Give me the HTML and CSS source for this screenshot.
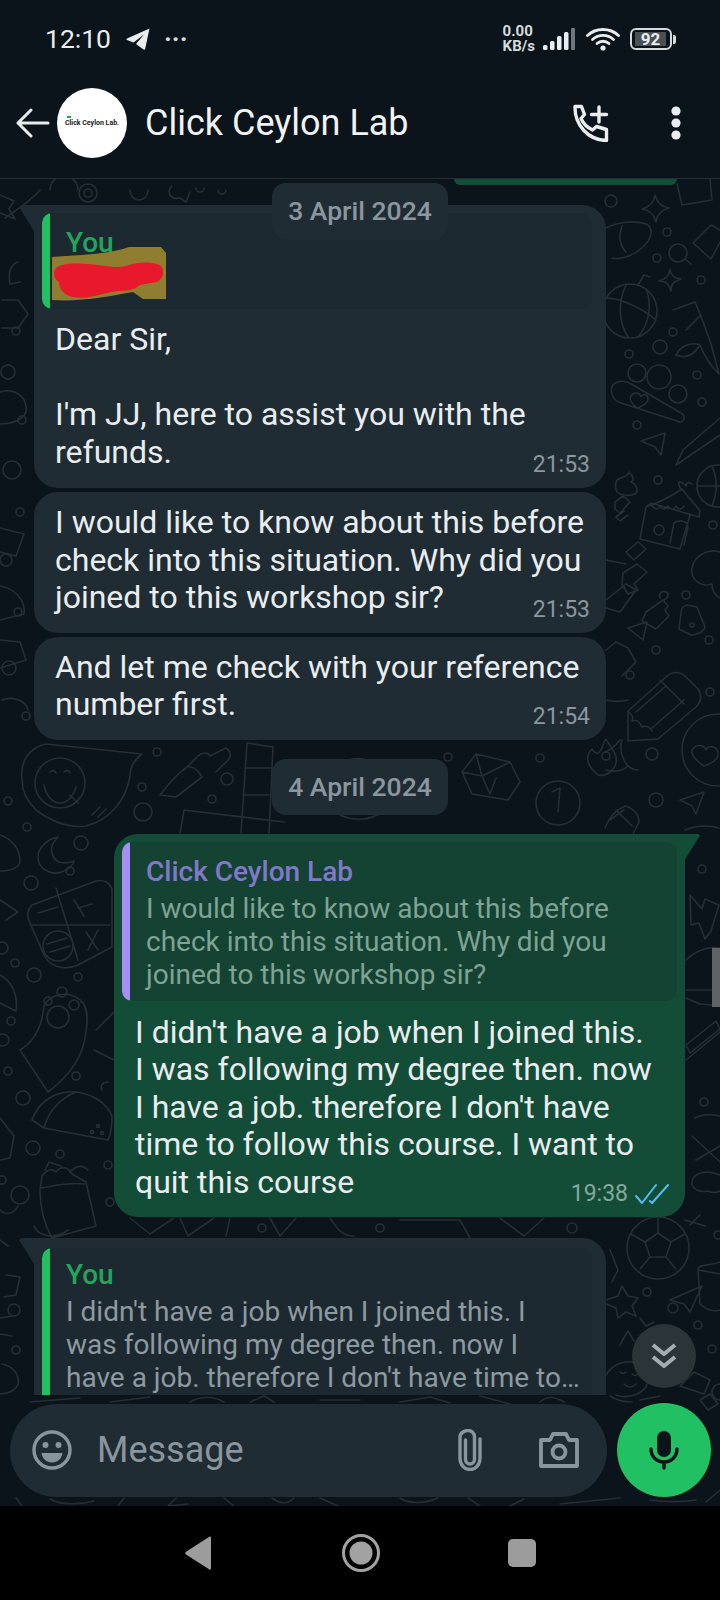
FILE: index.html
```html
<!DOCTYPE html>
<html lang="en">
<head>
    <meta charset="UTF-8">
    <meta name="viewport" content="width=device-width, initial-scale=1.0">
    <title>Click Ceylon Lab</title>
    <link rel="stylesheet" href="styles.css">
</head>
<body>

<div class="status-bar">
    <div class="status-left">
        <span class="clock">12:10</span>
        <svg class="icon-plane" width="24" height="22" viewBox="0 0 24 22"><path d="M23.5 .5 1 10.5c-.8.4-.7 1.3 0 1.600l6.500 2.400L18 6.500l-8 9.500 7.500 5.500c.8.400 1.600 0 1.700-.8z" fill="#e9edef"/></svg>
        <span class="status-dots">&middot;&middot;&middot;</span>
    </div>
    <div class="status-right">
        <div class="net-speed"><span>0.00</span><span>KB/s</span></div>
        <svg class="icon-signal" width="34" height="24" viewBox="0 0 34 24">
            <rect x="0" y="18" width="4.500" height="5" rx="1.500" fill="#e9edef"/>
            <rect x="7" y="14" width="4.500" height="9" rx="1.500" fill="#e9edef"/>
            <rect x="14" y="9" width="4.500" height="14" rx="1.500" fill="#e9edef"/>
            <rect x="21" y="5" width="4.500" height="18" rx="1.500" fill="#e9edef"/>
            <rect x="28" y="1" width="4" height="22" rx="1" fill="#70777b"/>
        </svg>
        <svg class="icon-wifi" width="34" height="24" viewBox="0 0 34 24" fill="none" stroke="#e9edef" stroke-width="2.800" stroke-linecap="round">
            <path d="M1.500 8.500C10 .5 24 .5 32.500 8.500"/>
            <path d="M6.500 12.500c6-5.500 15-5.500 21 0"/>
            <path d="M11 16.500c3.500-3 8.500-3 12 0"/>
            <circle cx="17" cy="21" r="2.600" fill="#e9edef" stroke="none"/>
        </svg>
        <div class="battery">
            <div class="battery-body"><span>92</span></div>
            <div class="battery-nub"></div>
        </div>
    </div>
</div>

<header class="app-bar">
    <svg class="icon-back" width="34" height="30" viewBox="0 0 34 30" fill="none" stroke="#e9edef" stroke-width="3" stroke-linecap="round" stroke-linejoin="round"><path d="M32 15H2M15 2 2 15l13 13"/></svg>
    <div class="avatar"><span class="avatar-mark"></span><span class="avatar-text">Click Ceylon Lab.</span></div>
    <div class="title">Click Ceylon Lab</div>
    <svg class="icon-call" width="38" height="38" viewBox="0 0 38 38" fill="none" stroke="#e9edef" stroke-width="3.400" stroke-linejoin="round"><path d="M3 2.500h6.500l3 8-3.500 4c2.500 5.500 6 9 11.500 11.500l4-3.500 10 3v11C16 36 2.500 21 3 2.500z"/><path d="M27 3v15M19.500 10.500h15" stroke-linecap="round"/></svg>
    <svg class="icon-more" width="12" height="36" viewBox="0 0 12 36" fill="#e9edef"><circle cx="6" cy="6" r="4.600"/><circle cx="6" cy="18" r="4.600"/><circle cx="6" cy="30" r="4.600"/></svg>
</header>

<main class="chat">
    <svg class="wallpaper" width="720" height="1327" viewBox="0 179 720 1327" fill="none" stroke="#252f35" stroke-width="1.600" stroke-linecap="round" stroke-linejoin="round">
        <!-- left margin, top -->
        <path d="M0 195l14 6-5 8 6 10-15-6M40 190c-10 12-24 20-35 28M18 262c-8 2-10 12-8 22l10-2M2 300h16l10 14-10 14H2M50 190a14 14 0 1 1 28 0"/>
        <circle cx="88" cy="193" r="9"/><circle cx="88" cy="193" r="4"/><circle cx="16" cy="331" r="4"/><circle cx="8" cy="372" r="7"/><circle cx="22" cy="420" r="4"/><circle cx="12" cy="470" r="9"/><circle cx="20" cy="512" r="4"/><circle cx="6" cy="560" r="6"/><circle cx="18" cy="612" r="4"/><circle cx="9" cy="668" r="7"/><circle cx="26" cy="716" r="4"/>
        <path d="M0 392c12-4 24 2 26 14 2 10-8 18-26 18M0 528l24 6-8 22-16-4M0 586c14 2 26 14 24 28l-24 6M0 640l20 2 6 18-26 8M2 700c10-4 24 0 26 10"/>
        <path d="M130 190c0 6 4 10 9 10s9-4 9-10M172 186c-6 6-2 14 8 12l6 4 4-10M196 188a4 4 0 1 0 8 0M218 190a4 4 0 1 0 8 0"/>
        <!-- right margin, top -->
        <circle cx="611" cy="201" r="6"/><circle cx="667" cy="232" r="4"/><circle cx="657" cy="258" r="4"/><circle cx="678" cy="253" r="9"/><path d="M685 259l6 5"/>
        <path d="M655 195c2 8 6 12 14 13-8 2-12 6-13 14-2-8-6-12-14-13 8-2 12-6 13-14zM670 269c1 7 4 10 11 10-7 2-10 5-10 12-2-7-5-10-12-10 7-2 10-5 11-12z"/>
        <path d="M677 184l5 21 30-5-2-21M693 243l18-18 14 8-14 26zM606 228c12-6 28-8 40-4 8 4 6 14-2 22-10 10-24 14-32 12M622 226c-4 10-2 20 4 26"/>
        <circle cx="701" cy="280" r="4"/><circle cx="630" cy="311" r="27"/><path d="M606 298c14 0 36 10 50 22M626 285c-8 16-8 36 2 52M646 289c6 14 4 34-8 48M638 285l6-10 6 2"/>
        <path d="M673 310l22-8 6 14 10 28 8 30M700 316l-14 14M700 345c-10-4-20 2-24 10 10 4 18 0 24-10zM700 345c4 10 10 20 18 28"/>
        <circle cx="673" cy="332" r="4"/><circle cx="660" cy="347" r="7"/><circle cx="629" cy="354" r="4"/><circle cx="637" cy="373" r="9"/><circle cx="659" cy="377" r="12"/><circle cx="678" cy="394" r="9"/><circle cx="697" cy="375" r="4"/><circle cx="702" cy="402" r="4"/><circle cx="637" cy="425" r="4"/>
        <path d="M613 385c5-6 14-4 20 0l48 28c6 4 2 12-4 8l-56-18c-8-2-12-12-8-18zM631 396c3-4 9-4 10 1 2-4 7-3 7 2 0 4-7 8-11 9-4-3-8-8-6-12z"/>
        <path d="M641 441l24-8-4 22-6-8z"/>
        <path d="M683 450l37-32M676 465l44-30M683 450l-7 15"/><circle cx="718" cy="486" r="21"/><path d="M698 486h22M712 466c6 14 6 26 0 40"/>
        <path d="M617 480c6-4 10-2 12-8 4 4 6 8 2 10 6 2 8 10 4 12-4 2-14 2-18-2-2-4-2-8 0-12z"/><circle cx="658" cy="480" r="4"/>
        <path d="M646 507c12-4 24-10 36-18l18 22-1 6-48-14zM646 507l-6 32 40 10 10-34M652 506c4 4 6 4 8 0 2 4 6 4 8 0 2 4 6 4 8 0 2 4 6 4 8 0M682 490c-4-4-4-8-2-8 2 0 4 2 6 4 0-4 4-4 6-2M670 543l4-20c6-4 14-2 14 4l-4 18"/><circle cx="659" cy="530" r="5"/>
        <circle cx="713" cy="525" r="4"/><path d="M720 552c-12-4-26 4-28 16-2 10 8 20 20 16 0 8 4 12 8 14"/>
        <path d="M615 502l8-6 7 6-10 11-5-4zM624 511l-8 6 4 4 8-6"/><path d="M626 552l12-10 8 7-12 11zM606 560l20 4M606 600l20-16 10 6-16 22-14-4"/>
        <path d="M623 573l14-9 10 8-13 12 4 6-10 4-6-10z"/><path d="M646 612l17-12 5 6-3 4 4 6-13 13-14-8zM660 598c-2-4 2-8 6-6 4 2 2 6-2 8"/>
        <circle cx="686" cy="595" r="4"/><path d="M628 628l19-6-4 18zM681 613a8 8 0 0 1 6-8l10 2 8 20c-2 6-10 8-14 8l-12-6z"/><circle cx="692" cy="625" r="2"/>
        <circle cx="709" cy="640" r="4"/><circle cx="656" cy="650" r="4"/><circle cx="630" cy="675" r="4"/><circle cx="710" cy="692" r="4"/>
        <path d="M606 650l10-8 12 6 8 14-14 14M606 700c8 2 14 2 22 0"/>
        <path d="M628 711l38-34c6-6 14-6 20 0l12 12c4 6 4 12-2 18l-38 32-30 2zM628 711c4 4 6 6 4 10 6-2 8 2 10 6 4-2 8 0 10 4M660 680l24 24M636 712l30-26M652 728l32-28"/>
        <circle cx="652" cy="754" r="6"/><path d="M622 740c-4 14 4 30 16 30M606 752c8-6 8-4 14-12M606 770c8 2 16 2 22-4"/>
        <circle cx="718" cy="750" r="36"/><path d="M692 750c4-6 12-6 14 0 2-6 12-4 12 4 0 6-8 10-14 12-6-4-14-10-12-16z"/>
        <!-- gap between the two dates -->
        <path d="M22 780c-2-18 6-32 24-36l96 10c-8 6-12 14-12 22-4 24-20 44-44 50-16 2-34-4-50-16-8-8-14-18-14-30z"/>
        <circle cx="60" cy="783" r="25"/><path d="M44 785c2 10 8 18 16 18 8 0 14-8 16-16M50 772c2-2 5-2 6 1M64 772c2-2 5-2 6 1M70 795l8 8M92 815l8-8M98 817l8-8"/>
        <path d="M160 795c6-8 14-18 24-26 4-4 10-2 14 2l4 6-26 20zM184 770l14-14c4-4 10-4 12 0l16-8c4 2 6 8 2 12l-12 12"/><circle cx="227" cy="779" r="6"/><circle cx="157" cy="752" r="4"/><circle cx="142" cy="787" r="4"/><circle cx="143" cy="812" r="9"/><circle cx="212" cy="799" r="4"/>
        <path d="M247 743l26 4-4 88M247 743l-6 90M245 768h26M243 795h26M180 834l4-24 100 12"/>
        <path d="M335 770c6-10 20-14 34-10l20 10M340 815c14 6 30 6 44-4"/>
        <path d="M462 772l14-18 34 8 10 20-12 18-36-6zM476 754l6 22-20-4M510 762l-28 14 8 18M490 794l6-16"/><circle cx="448" cy="757" r="4"/><circle cx="540" cy="758" r="4"/>
        <circle cx="558" cy="803" r="22"/><path d="M552 792l8-4-2 24"/><circle cx="606" cy="756" r="4"/><path d="M598 775c-10-8-14-18-6-26 2 4 6 6 8 2 4-4 2-8 6-12 4 8 12 14 10 24-2 8-10 14-18 12z"/>
        <path d="M605 828c4-10 10-18 20-22 8 2 14 8 14 16l-6 12M616 810l16 16M610 820l14-10"/><path d="M680 800l24-8-8 22-4-8z"/><circle cx="656" cy="800" r="7"/>
        <!-- left of the outgoing bubble -->
        <circle cx="8" cy="801" r="4"/><circle cx="27" cy="827" r="4"/><circle cx="81" cy="843" r="7"/><circle cx="70" cy="871" r="4"/><circle cx="31" cy="883" r="7"/>
        <path d="M58 837c-10 2-20 10-20 20 0 12 14 20 26 14 6-2 10-8 10-10-10 4-20 2-22-8-2-6 2-12 6-16z"/><path d="M0 835c12 4 20 14 20 26 0 6-8 10-20 10M0 900l18 12-12 8"/>
        <path d="M32 905l64-24c8-2 14 2 16 8v58l-34 18c-14 6-28 2-34-10l-14-32c-4-8-2-14 2-18z"/><path d="M56 888l22 72M30 925l80 0M38 913l20-6M74 900l10 16M78 908l14-4M86 932l12 18M98 930l-10 20"/><circle cx="58" cy="946" r="15"/><path d="M47 944l20-6M50 952l20-6"/>
        <circle cx="2" cy="948" r="6"/><circle cx="15" cy="963" r="4"/><circle cx="34" cy="975" r="7"/><circle cx="78" cy="977" r="4"/><path d="M0 975c12 6 18 20 16 36l-16-8"/>
        <path d="M20 1050c14-8 22-24 24-44 6-12 24-16 36-6 8 6 8 18 6 32-2 22-14 42-38 60z"/><circle cx="58" cy="1017" r="11"/><circle cx="48" cy="1001" r="4"/><circle cx="62" cy="992" r="5"/><circle cx="74" cy="1005" r="5"/>
        <circle cx="11" cy="1021" r="4"/><circle cx="3" cy="1040" r="6"/><circle cx="8" cy="1071" r="4"/><circle cx="76" cy="1076" r="4"/><circle cx="23" cy="1098" r="7"/><path d="M108 1082c-6 0-8 4-6 8M96 1030l18-18M94 1050l20 10"/>
        <path d="M32 1120c6-18 24-30 44-28 16 2 30 10 36 24M32 1120l12 8 64 12c4-8 4-16 4-24M76 1092c-16 6-28 20-32 36"/><circle cx="98" cy="1126" r="1.500"/><circle cx="92" cy="1132" r="1.500"/><circle cx="102" cy="1133" r="1.500"/>
        <path d="M0 1118l14 18-4 22-10 2M0 1210c6 6 14 4 18-4"/><circle cx="33" cy="1148" r="7"/><circle cx="60" cy="1154" r="4"/><circle cx="2" cy="1180" r="4"/><circle cx="108" cy="1165" r="4"/><circle cx="20" cy="1195" r="9"/><circle cx="110" cy="1202" r="4"/>
        <path d="M40 1190l2-14c4-6 10-8 14-4 4-6 12-6 16 2l14 8 10 44-44 12c-8-14-12-30-12-48zM40 1188c14-2 30-6 44-4M70 1172c6-6 12-8 18-2M34 1226c4 10 20 14 34 4M45 1170l4-8 12 4"/>
        <!-- under the outgoing bubble -->
        <path d="M130 1218l20 16 24-16M180 1218l8 18 26-18M230 1218l-4 18M270 1218l10 18 16-18M330 1218c6 8 10 18 24 18M400 1220h60l10 18M500 1218l24 18 20-18"/><circle cx="262" cy="1228" r="4"/><circle cx="380" cy="1228" r="4"/><circle cx="572" cy="1228" r="5"/>
        <!-- right of the outgoing bubble -->
        <circle cx="702" cy="869" r="4"/><path d="M690 895l12 14 3-10 14 6-8 26-6 8-6-16-8 2z"/><path d="M685 830c10-4 20-6 34-2M686 960c10-10 24-14 34-12M686 990l34 0 0 16-20-2-14-6"/>
        <path d="M686 1045l30-24 4 8-30 24zM686 1060l34-28"/><circle cx="704" cy="1102" r="4"/><path d="M695 1118c8-4 16-4 25-2M696 1160l24-14M720 1175c-14-6-28-2-28 8 0 6 8 10 16 8 4 2 8 2 12 0"/><path d="M692 1136l28 26"/><circle cx="718" cy="1235" r="4"/>
        <circle cx="658" cy="1248" r="31"/><path d="M658 1233l13 9-5 15h-16l-5-15zM658 1233v-15M671 1242l14-8M666 1257l10 12M650 1257l-10 12M645 1242l-14-8"/><path d="M690 1225l10-10M685 1220l20 6"/>
        <circle cx="647" cy="1292" r="4"/><path d="M670 1300l32-14-12 26-6-8z"/><path d="M720 1262c-10 4-18 2-22 6l2 36c6 6 14 8 20 6M698 1270l22 4"/>
        <path d="M610 1250l8 20-6 12M606 1300l12-4 4-10 6 10 10 2-6 8 4 10-10-4-8 6-2-10-10-4"/><circle cx="673" cy="1308" r="5"/><circle cx="698" cy="1325" r="4"/><circle cx="712" cy="1349" r="4"/>
        <path d="M620 1345c4-8 8-14 8-14l6 10M640 1318l6 8 8-4M606 1375c6-10 18-16 30-12 10 4 14 14 10 24-6 8-20 12-30 8M620 1372c2 2 4 2 6 0M632 1374c2 2 4 2 6 0M624 1384c4 4 8 4 12 0M680 1386l14-14 16 8-6 14z"/><circle cx="720" cy="1392" r="8"/>
        <path d="M610 1396c6 4 14 6 22 6M640 1400l20-4M700 1400l10-6 8 10-10 6z"/>
        <path d="M0 1240l8 6M6 1275l14 2-4 18-12 2M0 1334l12 2M2 1364c10 2 18 10 16 20-2 6-10 10-18 10M0 1318l12-2"/><circle cx="16" cy="1350" r="4"/><circle cx="14" cy="1310" r="6"/>
        <path d="M30 1402l50-4M110 1402l40-5M190 1402c10-6 24-6 34 0M250 1402l14-6 10 6M320 1400h40M400 1402l30-5 20 6M480 1396l30 8M540 1402c6-6 14-6 24 0"/>
        <path d="M16 1498l6 8M50 1499c10 6 30 6 44 2M124 1498l-6 8M176 1498l-8 8 20-2M224 1498l10 8M272 1498c8 6 16 6 22 0M320 1498l18 8M400 1498c8 6 24 6 38 0M468 1498l12 8M524 1499l-14 7M560 1504l60-6M650 1500c16 2 34 2 46 0M720 1490l-14 12"/>
    </svg>

    <div class="messages">
        <div class="sliver"></div>

        <div class="bubble incoming first tail">
            <div class="quote">
                <div class="quote-name you">You</div>
                <svg class="redaction" width="116" height="56" viewBox="0 0 116 56">
                    <path d="M1 11C30 9 60 8 78 1h32l5 6v46H92l-10-7C60 50 30 56 1 54z" fill="#8f7e30"/>
                    <path d="M5 22c10-7 30-4 50-2 10 2 17 1 23-1 12-4 27-3 32 1 4 6 2 13-4 16-11 2-18 2-21 6-10 4-15 2-25 4-15 4-30 8-42 4-6-2-10-8-10-14-6-4-6-10-3-14z" fill="#e8192c"/>
                </svg>
            </div>
            <p class="text">Dear Sir,<br><br>I'm JJ, here to assist you with the refunds.<span class="time">21:53</span></p>
        </div>

        <div class="bubble incoming">
            <p class="text">I would like to know about this before check into this situation. Why did you joined to this workshop sir?<span class="time">21:53</span></p>
        </div>

        <div class="bubble incoming">
            <p class="text">And let me check with your reference number first.<span class="time">21:54</span></p>
        </div>

        <div class="date-chip second">4 April 2024</div>

        <div class="bubble outgoing tail">
            <div class="quote">
                <div class="quote-name lab">Click Ceylon Lab</div>
                <div class="quote-body">I would like to know about this before check into this situation. Why did you joined to this workshop sir?</div>
            </div>
            <p class="text">I didn't have a job when I joined this. I was following my degree then. now I have a job. therefore I don't have time to follow this course. I want to quit this course<span class="time">19:38
                <svg width="34" height="22" viewBox="0 0 34 22" fill="none" stroke="#53bdeb" stroke-width="2" stroke-linecap="round" stroke-linejoin="round"><path d="M1 13l6 7L21 2M15 18l2 2L33 2"/></svg>
            </span></p>
        </div>

        <div class="bubble incoming tail last">
            <div class="quote">
                <div class="quote-name you">You</div>
                <div class="quote-body">I didn't have a job when I joined this. I was following my degree then. now I have a job. therefore I don't have time to…</div>
            </div>
        </div>
    </div>

    <div class="date-chip sticky">3 April 2024</div>
    <div class="fast-scroller"></div>
    <div class="scroll-down">
        <svg width="26" height="28" viewBox="0 0 26 28" fill="none" stroke="#a3adb2" stroke-width="4" stroke-linejoin="round"><path d="M2 3l11 9 11-9M2 15l11 9 11-9"/></svg>
    </div>

    <div class="composer">
        <div class="input-box">
            <svg class="icon-emoji" width="40" height="40" viewBox="0 0 40 40" fill="none" stroke="#8a969d" stroke-width="3.400"><circle cx="20" cy="20" r="18"/><circle cx="13.500" cy="15" r="3" fill="#8a969d" stroke="none"/><circle cx="26.500" cy="15" r="3" fill="#8a969d" stroke="none"/><path d="M9.500 23h21c-1 6-5 9.500-10.500 9.500S10.500 29 9.500 23z" fill="#8a969d" stroke="none"/></svg>
            <span class="placeholder">Message</span>
            <svg class="icon-clip" width="26" height="42" viewBox="0 0 26 42" fill="none" stroke="#8a969d" stroke-width="3.400" stroke-linecap="round"><path d="M8.500 11v19c0 3 2 5 4.500 5s4.500-2 4.500-5V8c0-4-3-6.500-6.500-6.500S3 4 3 8v21c0 7 4.500 11.500 10 11.500S23 36 23 29V10"/></svg>
            <svg class="icon-camera" width="40" height="36" viewBox="0 0 40 36" fill="none" stroke="#8a969d" stroke-width="3.800" stroke-linejoin="round"><path d="M2 8h9l3-6h13l3 6h8v26H2z"/><circle cx="20" cy="20" r="6.500"/></svg>
        </div>
        <div class="mic-btn">
            <svg width="30" height="40" viewBox="0 0 30 40" fill="none" stroke="#0b141a" stroke-width="3.400" stroke-linecap="round"><rect x="8" y="1" width="14" height="26" rx="7" fill="#0b141a" stroke="none"/><path d="M2 19c0 8 6 13 13 13s13-5 13-13M15 32v6"/></svg>
        </div>
    </div>
</main>

<nav class="nav-bar">
    <svg width="30" height="34" viewBox="0 0 30 34"><path d="M27 1.500v31c0 1-.8 1.500-1.600 1L2 18.500c-1-.8-1-2 0-2.800L25.400.8c.8-.5 1.600-.2 1.600.7z" fill="#9c9c9c"/></svg>
    <svg width="40" height="40" viewBox="0 0 40 40" fill="#a2a2a2"><circle cx="20" cy="20" r="17.500" fill="none" stroke="#a2a2a2" stroke-width="3"/><circle cx="20" cy="20" r="11.500"/></svg>
    <div class="nav-square"></div>
</nav>

</body>
</html>
```

FILE: styles.css
```css
* {
    box-sizing: border-box;
}
body {
    margin: 0;
    width: 720px;
    height: 1600px;
    display: flex;
    flex-direction: column;
    overflow: hidden;
    background-color: #000;
    color: #e9edef;
    font-family: Roboto, sans-serif;
}
p {
    margin: 0;
}
svg {
    display: block;
    flex-shrink: 0;
}

/* status bar */
.status-bar {
    height: 68px;
    padding: 10px 44px 0 45px;
    display: flex;
    align-items: center;
    justify-content: space-between;
    background-color: #0b141a;
}
.status-left {
    display: flex;
    align-items: center;
}
.clock {
    font-size: 26.500px;
    line-height: 30px;
}
.icon-plane {
    margin-left: 15px;
}
.status-dots {
    margin-left: 14px;
    font-size: 26px;
    font-weight: 700;
    line-height: 20px;
    color: #d5dadc;
}
.status-right {
    display: flex;
    align-items: center;
}
.net-speed {
    display: flex;
    flex-direction: column;
    font-size: 15px;
    font-weight: 700;
    line-height: 15px;
    color: #d5dadc;
}
.icon-signal {
    margin-left: 8px;
}
.icon-wifi {
    margin-left: 9px;
}
.battery {
    margin-left: 10px;
    display: flex;
    align-items: center;
}
.battery-body {
    width: 42px;
    height: 22px;
    padding: 2px 3px;
    border: 2px solid #d5dadc;
    border-radius: 6px;
}
.battery-body span {
    display: block;
    width: 31px;
    height: 14px;
    background-color: #4a5155;
    font-size: 17px;
    font-weight: 700;
    line-height: 14px;
    text-align: center;
}
.battery-nub {
    width: 3px;
    height: 9px;
    margin-left: 1px;
    border-radius: 0 2px 2px 0;
    background-color: #d5dadc;
}

/* header */
.app-bar {
    height: 111px;
    padding: 0 38px 0 16px;
    display: flex;
    align-items: center;
    background-color: #0b141a;
    border-bottom: 1px solid #232d33;
}
.avatar {
    width: 70px;
    height: 70px;
    margin-left: 7px;
    border-radius: 50%;
    background-color: #fff;
    display: flex;
    align-items: center;
    justify-content: center;
    position: relative;
}
.avatar-text {
    font-size: 7px;
    font-weight: 700;
    color: #1a1a1a;
    white-space: nowrap;
}
.avatar-mark {
    position: absolute;
    left: 10px;
    top: 28px;
    width: 4px;
    height: 2px;
    background-color: #1fa855;
}
.title {
    margin-left: 18px;
    flex: 1;
    font-size: 36px;
    line-height: 46px;
    color: #f1f3f4;
}
.icon-more {
    margin-left: 60px;
}

/* chat area */
.chat {
    height: 1327px;
    display: flex;
    flex-direction: column;
    position: relative;
    background-color: #0a141a;
}
.wallpaper {
    position: absolute;
    top: 0;
    left: 0;
}
.messages {
    height: 1217px;
    padding: 0 34px;
    display: flex;
    flex-direction: column;
    overflow: hidden;
    position: relative;
}
.sliver {
    width: 223px;
    height: 6px;
    flex-shrink: 0;
    margin-left: 420px;
    border-radius: 0 0 12px 12px;
    background-color: #144d37;
}
.bubble {
    flex-shrink: 0;
    position: relative;
    width: 572px;
    margin-top: 4px;
    padding: 12px 21px 16px;
    border-radius: 24px;
    background-color: #202c33;
}
.bubble.first {
    margin-top: 20px;
    padding: 8px 21px 17px;
}
.bubble.tail.incoming {
    border-top-left-radius: 0;
}
.bubble.tail.incoming::before {
    content: "";
    position: absolute;
    left: -15px;
    top: 0;
    width: 15px;
    height: 26px;
    background-color: #202c33;
    clip-path: polygon(15% 0, 100% 0, 100% 100%, 0 8%);
}
.bubble.outgoing {
    margin-top: 19px;
    margin-left: 80px;
    width: 571px;
    padding: 8px 8px 16px;
    background-color: #144d37;
    border-top-right-radius: 0;
}
.bubble.outgoing::after {
    content: "";
    position: absolute;
    right: -15px;
    top: 0;
    width: 15px;
    height: 26px;
    background-color: #144d37;
    clip-path: polygon(0 0, 85% 0, 100% 8%, 0 100%);
}
.bubble.last {
    margin-top: 21px;
    padding: 10px 14px 0 8px;
    border-radius: 24px 24px 0 0;
}
.text {
    font-size: 32px;
    line-height: 37.500px;
    color: #e9edef;
}
.first .text {
    margin-top: 12px;
}
.outgoing .text {
    margin: 13px 20px 0 13px;
}
.time {
    position: absolute;
    right: 16px;
    bottom: 9px;
    display: flex;
    align-items: center;
    font-size: 23px;
    line-height: 28px;
    color: #8a979f;
}
.outgoing .time {
    color: #84a99a;
}
.outgoing .time svg {
    margin-left: 7px;
}

/* quoted messages */
.quote {
    position: relative;
    padding: 13px 12px 7px 24px;
    margin: 0 -7px 0 -13px;
    border-radius: 10px;
    background-color: #1d2930;
    overflow: hidden;
}
.quote::before {
    content: "";
    position: absolute;
    left: 0;
    top: 0;
    bottom: 0;
    width: 8px;
    border-radius: 10px 0 0 10px;
    background-color: #21c063;
}
.outgoing .quote {
    margin: 0;
    height: 159px;
    background-color: #144233;
}
.outgoing .quote::before {
    background-color: #a78ff5;
}
.last .quote {
    margin: 0;
    padding: 10px 12px 20px 24px;
}
.quote-name {
    font-size: 28px;
    font-weight: 500;
    line-height: 33px;
}
.quote-name.you {
    color: #21a65c;
}
.quote-name.lab {
    color: #8278c9;
}
.quote-body {
    margin-top: 4px;
    font-size: 28px;
    line-height: 33px;
    color: #8d9aa1;
}
.outgoing .quote-body {
    color: #7fa394;
}
.redaction {
    margin: -13px 0 0 -15px;
}

/* things floating over the chat */
.date-chip {
    width: 176px;
    height: 56px;
    flex-shrink: 0;
    border-radius: 14px;
    background-color: #202c33;
    font-size: 26.500px;
    font-weight: 500;
    line-height: 56px;
    text-align: center;
    color: #8a979f;
}
.date-chip.second {
    margin: 19px 0 0 238px;
}
.date-chip.sticky {
    position: absolute;
    top: 4px;
    left: 272px;
}
.fast-scroller {
    position: absolute;
    right: 0;
    top: 769px;
    width: 8px;
    height: 59px;
    background-color: #5d6468;
}
.scroll-down {
    position: absolute;
    left: 632px;
    top: 1145px;
    width: 64px;
    height: 64px;
    border-radius: 50%;
    background-color: #2a3439;
    display: flex;
    align-items: center;
    justify-content: center;
}

/* message box */
.composer {
    padding: 8px 9px 9px 10px;
    display: flex;
    align-items: center;
    justify-content: space-between;
    position: relative;
}
.input-box {
    width: 597px;
    height: 93px;
    padding: 0 28px 0 22px;
    display: flex;
    align-items: center;
    border-radius: 47px;
    background-color: #202c33;
}
.placeholder {
    margin-left: 25px;
    flex: 1;
    font-size: 36px;
    color: #8a969d;
}
.icon-camera {
    margin-left: 56px;
}
.mic-btn {
    width: 94px;
    height: 94px;
    border-radius: 50%;
    background-color: #21c063;
    display: flex;
    align-items: center;
    justify-content: center;
}

/* android nav */
.nav-bar {
    height: 94px;
    padding: 0 184px;
    display: flex;
    align-items: center;
    justify-content: space-between;
    background-color: #000;
}
.nav-square {
    width: 28px;
    height: 28px;
    border-radius: 5px;
    background-color: #9c9c9c;
}
```
